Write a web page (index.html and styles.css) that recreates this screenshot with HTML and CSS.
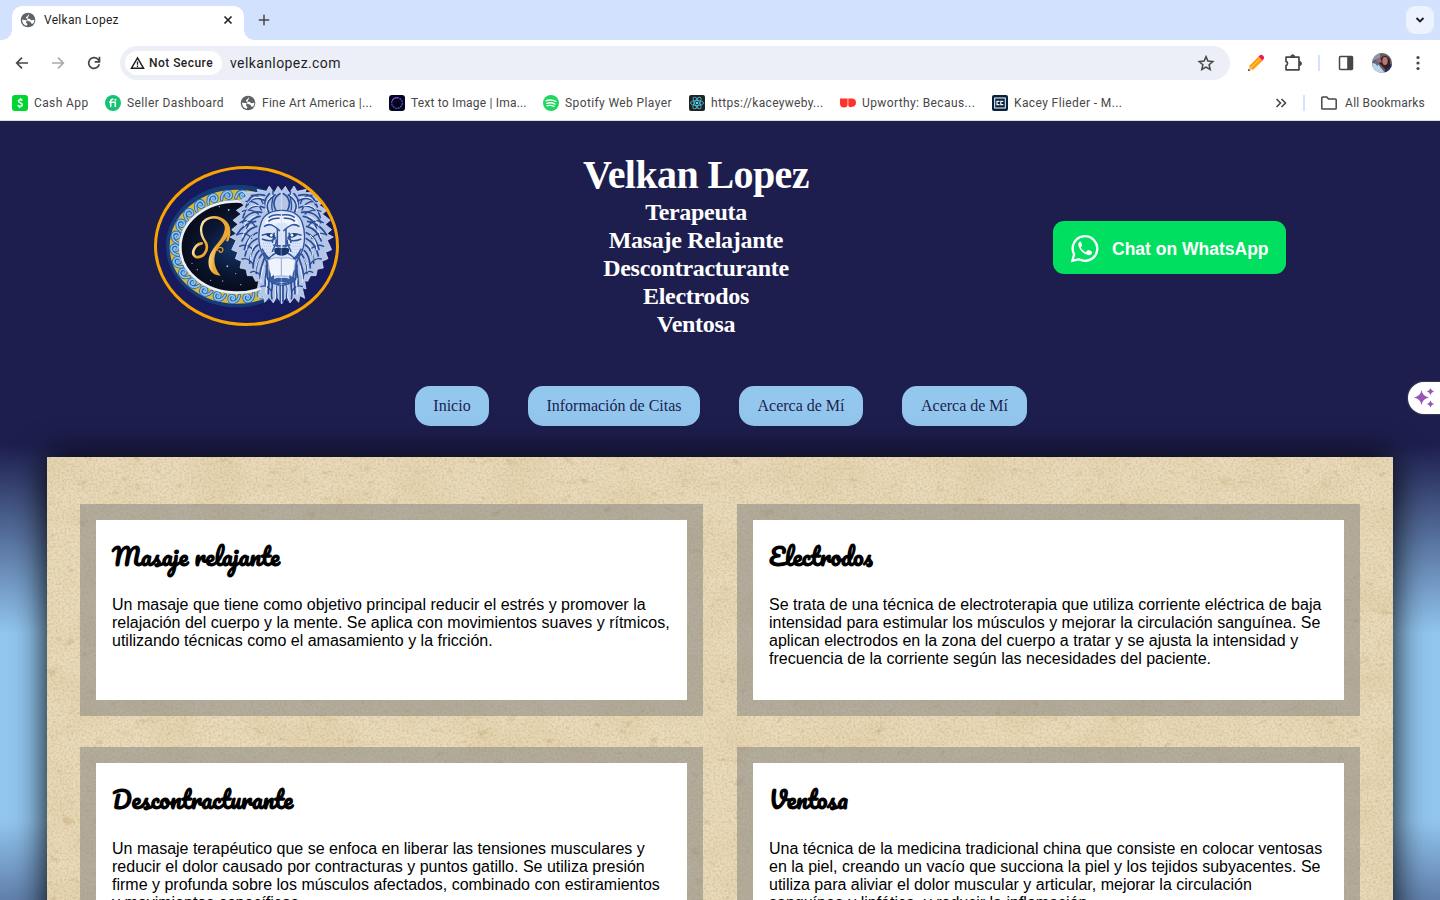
FILE: index.html
```html
<!DOCTYPE html>
<html lang="es">
<head>
<meta charset="utf-8">
<title>Velkan Lopez</title>
<link rel="stylesheet" href="styles.css">
</head>
<body>
<svg class="defs" width="0" height="0" aria-hidden="true">
  <symbol id="globe" viewBox="0 0 16 16"><circle cx="8" cy="8" r="7.300" fill="#5f6368"/><path d="M9.300 2.200c-1.800.3-1 1.800-2.300 2.300-1.200.5-1.700 2 .2 2.200 1.500.3 2.600-.5 3.200.7.400 1.200 2 .7 3.800.4.200 1.300-.2 2.700-1 3.800-1.300.4-2-.1-2.400-1.200-.3-1-1.700-.9-2.700-1.300C6.900 8.500 6.200 7.900 2 7.800c0 3 1.900 5.400 4.500 6l1-1.500c-.1-1-1.400-.9-1.500-2.100" fill="#fff"/></symbol>
</svg>

<div class="tabstrip">
  <div class="tab">
    <svg class="i16" viewBox="0 0 16 16"><use href="#globe"/></svg>
    <span class="tab-title">Velkan Lopez</span>
    <svg class="tab-close" viewBox="0 0 10 10"><path d="M1.500 1.500l7 7M8.500 1.500l-7 7" stroke="#1f1f1f" stroke-width="1.600"/></svg>
  </div>
  <svg class="tab-new" viewBox="0 0 12 12"><path d="M6 .8v10.400M.8 6h10.400" stroke="#474747" stroke-width="1.500"/></svg>
  <div class="tab-search"><svg width="10" height="8" viewBox="0 0 10 8"><path d="M1.500 2l3.500 3.500L8.500 2" fill="none" stroke="#1f1f1f" stroke-width="1.900"/></svg></div>
</div>

<div class="toolbar">
  <div class="nav-icons">
    <svg viewBox="0 0 16 16"><path d="M14 8H3M8 2.700L2.700 8 8 13.300" fill="none" stroke="#474747" stroke-width="1.700"/></svg>
    <svg viewBox="0 0 16 16"><path d="M2 8h11M8 2.700L13.300 8 8 13.300" fill="none" stroke="#ababab" stroke-width="1.700"/></svg>
    <svg viewBox="0 0 16 16"><path d="M13.300 9.300A5.400 5.400 0 1 1 11.900 4.200L13.400 5.800" fill="none" stroke="#474747" stroke-width="1.700"/><path d="M13.500 1.800v5H8.700" fill="none" stroke="#474747" stroke-width="1.700"/></svg>
  </div>
  <div class="omnibox">
    <div class="secure"><svg width="15" height="14" viewBox="0 0 15 14"><path d="M7.500 1.900L13.500 12.200H1.500z" fill="none" stroke="#1f1f1f" stroke-width="1.500"/><path d="M7.500 5.400v3.400M7.500 9.600v1.300" stroke="#1f1f1f" stroke-width="1.300"/></svg><span>Not Secure</span></div>
    <span class="url">velkanlopez.com</span>
    <svg class="star" viewBox="0 0 18 18"><path d="M9 2.600l1.900 4.500 4.900.4-3.700 3.200 1.100 4.800L9 13l-4.200 2.500 1.100-4.800-3.700-3.200 4.900-.4z" fill="none" stroke="#474747" stroke-width="1.500"/></svg>
  </div>
  <div class="actions">
    <svg width="18" height="18" viewBox="0 0 18 18"><path d="M1 17l1.300-5L5.900 15.700z" fill="#f8c99b"/><path d="M1 17l.6-2.200 1.600 1.600z" fill="#333"/><path d="M2.100 12L11.700 2.400l4 4-9.800 9.600z" fill="#ff9c0a"/><path d="M4.200 13.500l9.400-9.300" stroke="#ffc23f" stroke-width="1.300"/><path d="M11.500 2.600l1.800-1.700c1.600-1.100 4.700 1.800 3.500 3.900l-1.300 1.800z" fill="#f5145c"/></svg>
    <svg width="20" height="20" viewBox="0 0 20 20"><path d="M3 4.200h13v12.600H3v-4.200a2.200 2.200 0 0 0 0-4.200z" fill="none" stroke="#474747" stroke-width="1.700" stroke-linejoin="round"/><path d="M7.700 3.800a2 2 0 0 1 4 0z M16.500 8.500a2 2 0 0 1 0 4z" fill="#474747" stroke="#474747"/></svg>
    <span class="sep"></span>
    <svg width="16" height="16" viewBox="0 0 16 16"><rect x="1.500" y="1.500" width="13" height="13" rx="1" fill="none" stroke="#474747" stroke-width="1.500"/><path d="M9.200 1.500h5.300v13H9.200z" fill="#474747"/></svg>
    <svg width="20" height="20" viewBox="0 0 20 20"><clipPath id="face"><circle cx="10" cy="10" r="10"/></clipPath><g clip-path="url(#face)"><path d="M0 0h20v20H0z" fill="#655e66"/><path d="M0 0h8v5L0 8z" fill="#8998ae"/><path d="M0 10l6 1 7 9H0z" fill="#bdd3e8"/><path d="M13 13l7-2v9h-7z" fill="#20306b"/><path d="M9 5q5-5 9 2v7l-5 2-6-6z" fill="#35201f"/><ellipse cx="13" cy="8" rx="2.700" ry="4" fill="#b77875"/><path d="M3 6l5-1 2 4-4 1z" fill="#9b6870"/><path d="M2 8l5 3-2 2z" fill="#4279ac"/></g></svg>
    <svg width="16" height="18" viewBox="0 0 16 18"><g fill="#474747"><circle cx="8" cy="3.500" r="1.600"/><circle cx="8" cy="9" r="1.600"/><circle cx="8" cy="14.500" r="1.600"/></g></svg>
  </div>
</div>

<div class="bookmarks">
  <div class="bm b1"><svg viewBox="0 0 16 16"><rect width="16" height="16" rx="3" fill="#00d632"/><path d="M10.500 5.600C9.300 4.300 6.400 4.400 6.400 6.100c0 2 3.900 1.300 3.900 3.600 0 2-3.300 2.100-4.700.6M8.800 3.200L8.500 4.500M7.700 11.500L7.400 13" fill="none" stroke="#fff" stroke-width="1.500"/></svg><span>Cash App</span></div>
  <div class="bm b2"><svg viewBox="0 0 16 16"><circle cx="8" cy="8" r="8" fill="#14c372"/><path d="M5.700 12V6.300c0-1.700.8-2.200 2.700-1.900M4 7.200h6.300V12" fill="none" stroke="#fff" stroke-width="1.500"/><circle cx="10.400" cy="4.700" r="1" fill="#fff"/></svg><span>Seller Dashboard</span></div>
  <div class="bm b3"><svg viewBox="0 0 16 16"><use href="#globe"/></svg><span>Fine Art America |...</span></div>
  <div class="bm b4"><svg viewBox="0 0 16 16"><rect width="16" height="16" rx="3" fill="#05041c"/><circle cx="8" cy="8" r="5.300" fill="none" stroke="#4b55d8" stroke-width="1.200" stroke-dasharray="2 .7"/><path d="M3 6a5.300 5.300 0 0 1 6-3" fill="none" stroke="#a54ad8"/></svg><span>Text to Image | Ima...</span></div>
  <div class="bm b5"><svg viewBox="0 0 16 16"><circle cx="8" cy="8" r="8" fill="#1ed75f"/><path d="M3.200 5.700q5.200-1.600 9.700.8M3.800 8.300q4.300-1.300 8.200.8M4.200 10.700q3.600-1 6.900.8" fill="none" stroke="#fff" stroke-width="1.400" stroke-linecap="round"/></svg><span>Spotify Web Player</span></div>
  <div class="bm b6"><svg viewBox="0 0 16 16"><rect width="16" height="16" rx="2" fill="#222"/><g fill="none" stroke="#4bbdd8" stroke-width=".9"><ellipse cx="8" cy="8" rx="6.500" ry="2.500"/><ellipse cx="8" cy="8" rx="6.500" ry="2.500" transform="rotate(60 8 8)"/><ellipse cx="8" cy="8" rx="6.500" ry="2.500" transform="rotate(120 8 8)"/></g><circle cx="8" cy="8" r="1.300" fill="#61dafb"/></svg><span>https://kaceyweby...</span></div>
  <div class="bm b7"><svg viewBox="0 0 16 16"><path d="M0 3.500h7.600v5.700q0 3.300-3.600 3.300Q0 12.500 0 8.500zM8.300 3.500h3.200Q16 3.500 16 7.500t-4 4.300q-3 1.200-3.700-1.300z" fill="#ff3129"/></svg><span>Upworthy: Becaus...</span></div>
  <div class="bm b8"><svg viewBox="0 0 16 16"><rect width="16" height="16" rx="2" fill="#06203f"/><rect x="2.700" y="3" width="10.600" height="10" fill="none" stroke="#fff"/><path d="M7.500 6.400H5v3.200h2.500M11.300 6.400H8.800v3.200h2.500" fill="none" stroke="#fff" stroke-width="1.200"/></svg><span>Kacey Flieder - M...</span></div>
  <svg class="more" viewBox="0 0 12 12"><path d="M1.500 2l4 4-4 4M6.500 2l4 4-4 4" fill="none" stroke="#474747" stroke-width="1.600"/></svg>
  <span class="sep"></span>
  <svg class="folder" viewBox="0 0 18 16"><path d="M1.800 2.700q0-.7.7-.7h4.300l1.700 2h6.900q.8 0 .8.800v8.400q0 .8-.8.800H2.600q-.8 0-.8-.8z" fill="none" stroke="#474747" stroke-width="1.500" stroke-linejoin="round"/></svg>
  <span class="all">All Bookmarks</span>
</div>

<div class="site">
  <header class="hero">
    <svg class="logo" viewBox="42 33 555 480" role="img" aria-label="Leo">
      <defs>
        <clipPath id="oval"><ellipse cx="319.500" cy="273" rx="274" ry="236"/></clipPath>
        <radialGradient id="night"><stop offset="0" stop-color="#15386f"/><stop offset=".55" stop-color="#0b1736"/><stop offset="1" stop-color="#080b18"/></radialGradient>
        <linearGradient id="gold" x1="0" y1="0" x2="1" y2=".3"><stop offset="0" stop-color="#fff4cf"/><stop offset=".5" stop-color="#e9a62c"/><stop offset="1" stop-color="#f0a834"/></linearGradient>
        <g id="wave" fill="none" stroke-linecap="round"><path d="M-18 10C-13-17 15-17 13 2 10 15-7 9-3-1 1-6 7-1 3 3" stroke="#2866b1" stroke-width="10"/><path d="M-18 10C-13-17 15-17 13 2 10 15-7 9-3-1 1-6 7-1 3 3" stroke="#8fc4ec" stroke-width="5"/></g>
        <g id="half">
          <path d="M426 110L414 94 402 114 388 93 379 109 351 103 355 113 309 110 322 125 298 139 312 151 289 166 303 177 279 196 294 208 275 224 289 236 270 246 288 256 275 284 293 292 286 311 304 319 300 339 318 343 322 362 338 362 347 379 356 377 352 402 363 398 356 430 370 422 374 442 387 427 400 444 410 425 426 446z" fill="#b4c5e8" stroke="#dfe8fa" stroke-width="2"/>
          <g fill="none" stroke="#284b96" stroke-width="5" stroke-linecap="round">
            <path d="M420 116c-19 10-23 32-12 51M405 120c-22 14-31 30-18 53M388 116c-14 15-19 28-7 46M374 121c-32-8-51 8-50 28M377 138c-28-16-52-5-59 18M373 158c-25-13-60 3-64 30M365 172c-23-5-48 5-57 31M360 184c-16 1-36 16-40 39M347 199c-23 3-43 19-56 39M350 214c-23 6-37 24-44 44M351 233c-16 7-32 24-38 50M351 251c-20 9-31 28-36 52M354 270c-18 11-25 35-25 55M357 287c-14 13-17 34-18 52M365 298c-12 17-19 34-16 57M373 309c-6 22-17 37-12 62M379 332c3 20-6 40-3 58M383 358c8 17 2 34 2 58M394 378c8 15-4 31 2 53M409 393c-5 15 6 29-1 43M421 390v50"/>
            <path d="M397 165c-7-23 8-37 1-55M334 121c17-2 31 9 35 25M318 139c21-2 39 7 46 26M307 169c18-8 37-2 48 8M300 203c14-11 36-5 44 9M290 240c15-10 34-4 45 10M299 274c15-8 33 0 42 12M306 312c16-5 27 6 34 17M332 352c11-7 23-1 30 11M363 395c13-7 25 2 31 13" stroke-width="4"/>
          </g>
          <g fill="none" stroke="#f1f5ff" stroke-width="3"><path d="M400 120c-21 14-27 30-19 48M370 130c-24-9-38 2-48 16M360 153c-21-7-38 6-43 22M346 183c-18 5-30 18-33 31M338 210c-20 10-28 22-30 38M340 240c-18 14-20 35-20 46M347 266c-16 18-15 35-16 50M358 310c-13 20-11 34-10 40M370 332c-2 21-12 34-6 50M378 370c7 19-4 35 1 48M409 387c-8 22 3 34-5 47"/></g>
          <path d="M426 166c-31-1-54 13-62 35-9 24-9 53-4 76 5 20 14 24 20 45l3 51q17 17 43 18" fill="#d9e4f8" stroke="#2c5099" stroke-width="4"/>
          <path d="M378 195q18-21 46-19v30q-13-9-20 11-13-9-31-3z" fill="#f1f5fd"/>
          <g fill="none" stroke="#31549d" stroke-width="4.500"><path d="M372 215c18-14 31-2 48 13M365 241c21-9 31 1 43 9M366 252c20 8 33 7 39-2M424 180c-18-3-29 0-38 8M419 190c-17-2-27 3-34 9M408 253c4 16-9 25-11 38M403 233l-6 31M366 281c8 18 16 25 24 31M370 293c5 12 11 18 18 24M412 220v56M399 270l24 3M424 292q-22-3-42 25l1 50q12 17 42 19"/></g>
          <path d="M403 281q10-6 23-2v23q-15 1-23-12z" fill="#17346e"/><path d="M376 237q18-9 31 7-16 11-31-7z" fill="#21467f"/><circle cx="394" cy="241" r="4" fill="#fff"/>
          <path d="M383 315q20-10 43-6v54q-18-2-34 7z" fill="#eef3fc" stroke="#6d86b9" stroke-width="2"/><path d="M385 342q9 12 8 24l9-7v13q10-5 24-3v12q-26 6-39-7z" fill="#355ca1"/>
          <path d="M370 265h23M366 274h29M372 283h24M380 293h16M387 302h9" stroke="#8298c6" stroke-width="2" stroke-dasharray="2 4"/>
        </g>
      </defs>
      <ellipse cx="319.500" cy="273" rx="275" ry="237" fill="#171a5c"/>
      <g clip-path="url(#oval)">
        <ellipse cx="290" cy="273" rx="212" ry="184" fill="#163b78"/>
        <ellipse cx="290" cy="275" rx="186" ry="156" fill="#174079" stroke="#d5b83c" stroke-width="30"/>
        <use href="#wave" transform="translate(368 416) rotate(155)"/><use href="#wave" transform="translate(325 428) rotate(169)"/><use href="#wave" transform="translate(280 431) rotate(183)"/><use href="#wave" transform="translate(236 424) rotate(197)"/><use href="#wave" transform="translate(195 409) rotate(211)"/><use href="#wave" transform="translate(159 385) rotate(225)"/><use href="#wave" transform="translate(131 355) rotate(239)"/><use href="#wave" transform="translate(113 321) rotate(253)"/><use href="#wave" transform="translate(105 283) rotate(267)"/><use href="#wave" transform="translate(108 245) rotate(281)"/><use href="#wave" transform="translate(122 209) rotate(295)"/><use href="#wave" transform="translate(146 177) rotate(309)"/><use href="#wave" transform="translate(179 150) rotate(323)"/><use href="#wave" transform="translate(218 131) rotate(337)"/><use href="#wave" transform="translate(261 121) rotate(351)"/><use href="#wave" transform="translate(306 120) rotate(5)"/><use href="#wave" transform="translate(350 127) rotate(19)"/>
        <ellipse cx="290" cy="276" rx="169" ry="137" fill="url(#night)" stroke="#e8efff" stroke-width="8"/>
        <g fill="none" stroke="url(#gold)" stroke-linecap="round"><path d="M198 264C190 252 180 232 184 215 190 187 222 183 240 190 266 202 274 230 262 256" stroke-width="7"/><path d="M198 264C208 292 185 309 168 306 151 297 163 269 185 265" stroke-width="8"/></g>
        <path d="M216 188q42-5 53 27c5 25-20 47-37 67-14 24-12 55 10 80-37-1-43-38-31-66 12-26 38-42 43-72 3-20-12-32-38-36z" fill="url(#gold)"/>
        <path d="M230 288c4-17 22-12 18-1-3 8-13 5-10-2" fill="none" stroke="#dd9b2d" stroke-width="4"/>
        <g fill="#8ab8e8"><circle cx="266" cy="165" r="3"/><circle cx="238" cy="155" r="2"/><circle cx="172" cy="344" r="2"/><circle cx="262" cy="334" r="3"/><circle cx="287" cy="356" r="2"/><circle cx="212" cy="376" r="2"/><circle cx="156" cy="325" r="2"/><circle cx="248" cy="378" r="2"/><circle cx="302" cy="389" r="2"/></g>
        <use href="#half"/><use href="#half" transform="matrix(-1 0 0 1 850 0)"/>
      </g>
      <ellipse cx="319.500" cy="273" rx="273" ry="235.500" fill="none" stroke="#f9a302" stroke-width="9"/>
    </svg>
    <div class="titles">
      <h1>Velkan Lopez</h1>
      <h2>Terapeuta</h2><h2>Masaje Relajante</h2><h2>Descontracturante</h2><h2>Electrodos</h2><h2>Ventosa</h2>
    </div>
    <a class="whatsapp"><svg width="30" height="30" viewBox="0 0 30 30"><path d="M2.300 26.800l1.800-6.500A12.300 12.300 0 1 1 9 25.300z" fill="none" stroke="#fff" stroke-width="2.300"/><path d="M10.500 7.500c-1.200 0-2.300 1.500-2.200 3.300.3 4.700 6 10.200 10.600 10.400 1.900 0 3.500-1.500 3.200-3.100-.1-.6-3.600-2.200-4.100-2-.7.2-1.400 2-2 2-1.300-.1-4.600-3-5.100-4.600-.1-.6 1.300-1.500 1.200-2.300-.2-1-1-3.600-1.600-3.700z" fill="#fff"/></svg><span>Chat on WhatsApp</span></a>
  </header>
  <nav class="menu"><a class="m1">Inicio</a><a class="m2">Información de Citas</a><a class="m3">Acerca de Mí</a><a class="m4">Acerca de Mí</a></nav>
  <main class="paper">
    <svg class="grain" width="1346" height="443" aria-hidden="true">
      <filter id="speckle" x="0" y="0" width="100%" height="100%" color-interpolation-filters="sRGB"><feTurbulence type="fractalNoise" baseFrequency=".45" numOctaves="3" seed="8"/><feColorMatrix values="0 0 0 0 .66  0 0 0 0 .51  0 0 0 0 .3  .6 0 0 0 -.24"/></filter>
      <filter id="cloud" x="0" y="0" width="100%" height="100%" color-interpolation-filters="sRGB"><feTurbulence type="fractalNoise" baseFrequency=".02 .03" numOctaves="6" seed="4"/><feColorMatrix values="0 0 0 0 .8  0 0 0 0 .7  0 0 0 0 .48  .4 0 0 0 -.15"/></filter>
      <filter id="flecks" x="0" y="0" width="100%" height="100%" color-interpolation-filters="sRGB"><feTurbulence type="fractalNoise" baseFrequency=".07 .1" numOctaves="6" seed="21"/><feColorMatrix values="0 0 0 0 .7  0 0 0 0 .57  0 0 0 0 .38  1.500 0 0 0 -1"/></filter>
      <rect width="100%" height="100%" filter="url(#cloud)"/><rect width="100%" height="100%" filter="url(#speckle)"/><rect width="100%" height="100%" filter="url(#flecks)"/>
    </svg>
    <article class="card"><div class="card-body"><h3>Masaje relajante</h3><p>Un masaje que tiene como objetivo principal reducir el estrés y promover la<br>relajación del cuerpo y la mente. Se aplica con movimientos suaves y rítmicos,<br>utilizando técnicas como el amasamiento y la fricción.</p></div></article>
    <article class="card"><div class="card-body"><h3>Electrodos</h3><p>Se trata de una técnica de electroterapia que utiliza corriente eléctrica de baja<br>intensidad para estimular los músculos y mejorar la circulación sanguínea. Se<br>aplican electrodos en la zona del cuerpo a tratar y se ajusta la intensidad y<br>frecuencia de la corriente según las necesidades del paciente.</p></div></article>
    <article class="card"><div class="card-body"><h3>Descontracturante</h3><p>Un masaje terapéutico que se enfoca en liberar las tensiones musculares y<br>reducir el dolor causado por contracturas y puntos gatillo. Se utiliza presión<br>firme y profunda sobre los músculos afectados, combinado con estiramientos<br>y movimientos específicos.</p></div></article>
    <article class="card"><div class="card-body"><h3>Ventosa</h3><p>Una técnica de la medicina tradicional china que consiste en colocar ventosas<br>en la piel, creando un vacío que succiona la piel y los tejidos subyacentes. Se<br>utiliza para aliviar el dolor muscular y articular, mejorar la circulación<br>sanguínea y linfática, y reducir la inflamación.</p></div></article>
  </main>
  <div class="assistant"><svg width="21" height="21" viewBox="0 0 21 21"><path d="M7.500 3Q8.500 9.200 15 10.500 8.500 11.800 7.500 18 6.500 11.800 0 10.500 6.500 9.200 7.500 3zM16.500 1q.7 2.800 3.500 3.500-2.800.7-3.500 3.500-.7-2.800-3.500-3.500Q15.800 3.800 16.500 1zM16.500 13.500q.7 2.800 3.500 3.500-2.800.7-3.500 3.500-.7-2.800-3.500-3.500 2.800-.7 3.500-3.500z" fill="#9755b5"/></svg></div>
</div>
</body>
</html>
```
FILE: styles.css
```css
* { box-sizing: border-box; }
html, body { margin: 0; height: 900px; overflow: hidden; }
body { background: #fff; font-family: Roboto, "Noto Sans", sans-serif; font-size: 12px; color: #1f1f1f; }
svg { display: block; flex: none; }
h1, h2, h3, p { margin: 0; }
.defs { position: absolute; }

.tabstrip { height: 40px; background: #d1e1fe; display: flex; align-items: flex-start; }
.tab { width: 232px; height: 34px; margin: 6px 0 0 12px; padding: 0 11px 6px 8px; display: flex; align-items: center; background: #fff; border-radius: 10px 10px 0 0; position: relative; }
.tab::before, .tab::after { content: ""; position: absolute; bottom: 0; width: 10px; height: 10px; }
.tab::before { left: -10px; background: radial-gradient(circle at 0 0, transparent 9.5px, #fff 10px); }
.tab::after { right: -10px; background: radial-gradient(circle at 100% 0, transparent 9.5px, #fff 10px); }
.i16 { width: 16px; height: 16px; }
.tab-title { margin-left: 8px; flex: 1; letter-spacing: .3px; }
.tab-close { width: 10px; height: 10px; }
.tab-new { width: 12px; height: 12px; margin: 14px 0 0 14px; }
.tab-search { width: 28px; height: 28px; margin: 6px 6px 0 auto; border-radius: 9px; background: #ecf3fe; display: flex; align-items: center; justify-content: center; }

.toolbar { height: 46px; display: flex; align-items: center; background: #fff; }
.nav-icons { width: 120px; padding-left: 14px; display: flex; gap: 20px; }
.nav-icons svg { width: 16px; height: 16px; }
.omnibox { width: 1110px; height: 34px; padding: 0 15px 0 5px; border-radius: 17px; background: #eceff7; display: flex; align-items: center; }
.secure { width: 97px; height: 24px; padding-left: 5px; gap: 4px; border-radius: 12px; background: #fff; display: flex; align-items: center; font-weight: 500; letter-spacing: .46px; white-space: nowrap; }
.url { margin-left: 8px; flex: 1; font-size: 14px; letter-spacing: .4px; }
.star { width: 18px; height: 18px; }
.actions { display: flex; flex: 1; align-items: center; padding-left: 17px; }
.actions svg:nth-of-type(2) { margin-left: 18px; }
.sep { width: 2px; height: 16px; background: #d3e3fd; }
.actions .sep { margin-left: 15px; }
.actions svg:nth-of-type(3) { margin-left: 18px; }
.actions svg:nth-of-type(4) { margin-left: 18px; }
.actions svg:nth-of-type(5) { margin-left: 18px; }

.bookmarks { height: 35px; border-bottom: 1px solid #dcdcdc; display: flex; align-items: center; padding: 0 14px 0 12px; color: #474747; letter-spacing: .39px; white-space: nowrap; }
.bm { display: flex; align-items: center; gap: 6px; }
.bm svg { width: 16px; height: 16px; }
.b1 { width: 93px; } .b2 { width: 135px; } .b3 { width: 149px; letter-spacing: .28px; } .b4 { width: 154px; letter-spacing: .19px; }
.b5 { width: 146px; } .b6 { width: 151px; letter-spacing: .31px; } .b7 { width: 152px; } .b8 { width: 150px; }
.more { width: 12px; height: 12px; margin-left: auto; }
.bookmarks .sep { margin: 0 15px 0 16px; }
.folder { width: 18px; height: 16px; margin-right: 7px; }
.all { letter-spacing: .2px; padding-right: 1px; }

.site { height: 779px; overflow: hidden; position: relative; background: linear-gradient(#1d1e4e 0 324px, #92c6ef 512px 700px, #1d1e4e 888px); }
.hero { height: 265px; padding: 45px 154px 0; display: grid; grid-template-columns: 185px 1fr 233px; }
.logo { width: 185px; height: 160px; }
.titles { margin-top: -15px; text-align: center; color: #fff; font-family: "Liberation Serif", serif; }
.titles h1 { font-size: 40px; line-height: 47px; letter-spacing: -.6px; }
.titles h2 { font-size: 24px; line-height: 28px; letter-spacing: -.3px; }
.whatsapp { width: 233px; height: 53px; margin-top: 55px; padding: 2px 0 0 17px; border-radius: 11px; background: #00df5f; display: flex; align-items: center; gap: 12px; color: #fff; font: bold 17.500px "Liberation Sans", sans-serif; white-space: nowrap; }
.whatsapp span { padding-top: 1px; }
.menu { height: 40px; margin-left: 415px; display: flex; gap: 39px; font: 16px "Liberation Serif", serif; }
.menu a { height: 40px; display: flex; align-items: center; justify-content: center; border-radius: 15px; background: #94c7ee; color: #1d1e4e; white-space: nowrap; }
.m1 { width: 74px; } .m2 { width: 172px; } .m3 { width: 124px; } .m4 { width: 125px; }
.paper { position: relative; width: 1346px; height: 700px; margin: 31px 47px 0; padding: 47px 33px; display: grid; grid-template-columns: 623px 623px; grid-auto-rows: 212px; gap: 31.400px 34px; align-content: start; background: #e9dbbb; box-shadow: 0 0 32px #000; }
.grain { position: absolute; left: 0; top: 0; }
.card { position: relative; padding: 16px; background: rgba(128, 128, 128, .5); }
.card-body { height: 180px; padding: 16px; background: #fff; color: #000; font: 16px/18px "Liberation Sans", sans-serif; white-space: nowrap; }
.card h3 { height: 41px; line-height: 41px; margin-bottom: 19.200px; font-family: Pacifico, Lato, cursive; font-weight: 700; font-size: 23.400px; }
.assistant { position: absolute; right: 0; top: 260.500px; width: 32px; height: 32px; padding: 5px 0 0 6px; border-radius: 16px 0 0 16px; background: #fff; box-shadow: 0 0 2px #777; }
```
